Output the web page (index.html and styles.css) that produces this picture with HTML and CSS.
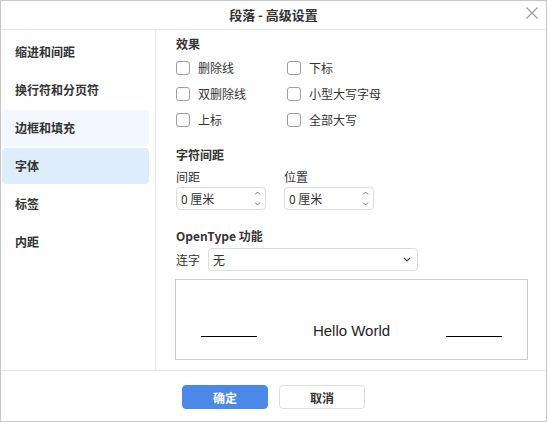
FILE: index.html
```html
<!DOCTYPE html>
<html lang="zh">
<head>
<meta charset="utf-8">
<title>段落 - 高级设置</title>
<link rel="stylesheet" href="styles.css">
</head>
<body>
<div class="dialog">
  <div class="header">
    <span class="title">段落 - 高级设置</span>
    <span class="close">
      <svg width="12" height="12" viewBox="0 0 12 12"><path d="M0.5 0.5L11.5 11.5M11.5 0.5L0.5 11.5" stroke="#9a9a9a" stroke-width="1.2" fill="none"/></svg>
    </span>
  </div>
  <div class="main">
    <div class="sidebar">
      <div class="nav-item">缩进和间距</div>
      <div class="nav-item">换行符和分页符</div>
      <div class="nav-item hover">边框和填充</div>
      <div class="nav-item active">字体</div>
      <div class="nav-item">标签</div>
      <div class="nav-item">内距</div>
    </div>
    <div class="content">
      <div class="heading">效果</div>
      <div class="effects">
        <label class="check"><span class="box"></span>删除线</label>
        <label class="check"><span class="box"></span>下标</label>
        <label class="check"><span class="box"></span>双删除线</label>
        <label class="check"><span class="box"></span>小型大写字母</label>
        <label class="check"><span class="box"></span>上标</label>
        <label class="check"><span class="box"></span>全部大写</label>
      </div>
      <div class="heading h2">字符间距</div>
      <div class="spacing">
        <div class="field">
          <div class="field-label">间距</div>
          <div class="spin">
            <span class="spin-val">0 厘米</span>
            <span class="arrows">
              <svg width="7" height="17" viewBox="0 0 7 17"><path d="M1 4.5L3.5 2L6 4.5M1 12.5L3.5 15L6 12.5" stroke="#777" stroke-width="1" fill="none"/></svg>
            </span>
          </div>
        </div>
        <div class="field">
          <div class="field-label">位置</div>
          <div class="spin">
            <span class="spin-val">0 厘米</span>
            <span class="arrows">
              <svg width="7" height="17" viewBox="0 0 7 17"><path d="M1 4.5L3.5 2L6 4.5M1 12.5L3.5 15L6 12.5" stroke="#777" stroke-width="1" fill="none"/></svg>
            </span>
          </div>
        </div>
      </div>
      <div class="heading h3">OpenType 功能</div>
      <div class="lig-row">
        <span class="lig-label">连字</span>
        <div class="select">
          <span>无</span>
          <svg width="8" height="5" viewBox="0 0 8 5"><path d="M1 1L4 4L7 1" stroke="#444" stroke-width="1.2" fill="none"/></svg>
        </div>
      </div>
      <div class="preview">
        <span class="rule"></span>
        <span class="sample">Hello World</span>
        <span class="rule"></span>
      </div>
    </div>
  </div>
  <div class="footer">
    <button class="btn primary">确定</button>
    <button class="btn">取消</button>
  </div>
</div>
</body>
</html>
```

FILE: styles.css
```css
* { box-sizing: border-box; }
html, body { margin: 0; padding: 0; background: #fff; }
body {
  font-family: "Noto Sans CJK SC", "Liberation Sans", sans-serif;
  color: #333;
  font-size: 12px;
}
.dialog {
  width: 547px;
  height: 422px;
  border: 1px solid #c6c6c6;
  display: flex;
  flex-direction: column;
}
.header {
  height: 29px;
  border-bottom: 1px solid #e6e6e6;
  display: flex;
  align-items: center;
  justify-content: center;
  position: relative;
}
.title {
  font-size: 13px;
  font-weight: bold;
  line-height: 18px;
  color: #333;
  margin-top: -1px;
}
.close {
  position: absolute;
  right: 8px;
  top: 6px;
  width: 12px;
  height: 12px;
  display: flex;
}
.main {
  height: 341px;
  border-bottom: 1px solid #e6e6e6;
  display: flex;
}
.sidebar {
  width: 155px;
  border-right: 1px solid #e6e6e6;
  padding: 4px 6px 0 1px;
  display: flex;
  flex-direction: column;
  gap: 2px;
}
.nav-item {
  height: 36px;
  line-height: 36px;
  padding-left: 13px;
  font-weight: bold;
  border-radius: 4px;
  color: #333;
}
.nav-item.hover { background: #f3f8ff; }
.nav-item.active { background: #deedfc; }
.content {
  flex: 1;
  padding: 5px 0 0 20px;
}
.heading {
  font-weight: bold;
  line-height: 18px;
  height: 18px;
  color: #333;
}
.effects {
  margin-top: 2px;
  display: grid;
  grid-template-columns: 111px 1fr;
}
.check {
  height: 26px;
  display: flex;
  align-items: center;
  line-height: 18px;
}
.box {
  width: 14px;
  height: 14px;
  border: 1px solid #9e9e9e;
  border-radius: 3px;
  margin-right: 8px;
  background: #fff;
}
.heading.h2 { margin-top: 13px; }
.spacing {
  display: flex;
  margin-top: 4px;
}
.field { width: 108px; }
.field-label { line-height: 18px; height: 18px; margin-bottom: 1px; }
.spin {
  width: 90px;
  height: 23px;
  border: 1px solid #dcdcdc;
  border-radius: 4px;
  display: flex;
  align-items: center;
  justify-content: space-between;
  padding: 0 4px 0 4px;
}
.spin-val { line-height: 18px; }
.arrows { display: flex; }
.heading.h3 { margin-top: 17px; }
.lig-row {
  margin-top: 3px;
  display: flex;
  align-items: center;
  height: 23px;
}
.lig-label { width: 32px; line-height: 18px; }
.select {
  width: 210px;
  height: 23px;
  border: 1px solid #dcdcdc;
  border-radius: 4px;
  display: flex;
  align-items: center;
  justify-content: space-between;
  padding: 0 6px 0 4px;
}
.preview {
  margin: 8px 0 0 -1px;
  width: 353px;
  height: 81px;
  border: 1px solid #cbcbcb;
  display: flex;
  justify-content: space-between;
  align-items: flex-end;
  padding: 0 25px 20px 25px;
}
.rule {
  width: 56px;
  height: 1px;
  background: #000;
  margin-bottom: 2px;
}
.sample {
  font-family: "Liberation Sans", Arial, sans-serif;
  font-size: 15px;
  line-height: 17px;
  color: #222;
}
.footer {
  flex: 1;
  display: flex;
  justify-content: center;
  align-items: flex-start;
  padding-top: 14px;
  gap: 11px;
}
.btn {
  width: 86px;
  height: 24px;
  border: 1px solid #dedede;
  border-radius: 4px;
  background: #fff;
  font-family: "Noto Sans CJK SC", sans-serif;
  font-size: 12px;
  font-weight: bold;
  color: #333;
  padding: 0;
}
.btn.primary {
  background: #4a89e8;
  border-color: #4a89e8;
  color: #fff;
}
```
